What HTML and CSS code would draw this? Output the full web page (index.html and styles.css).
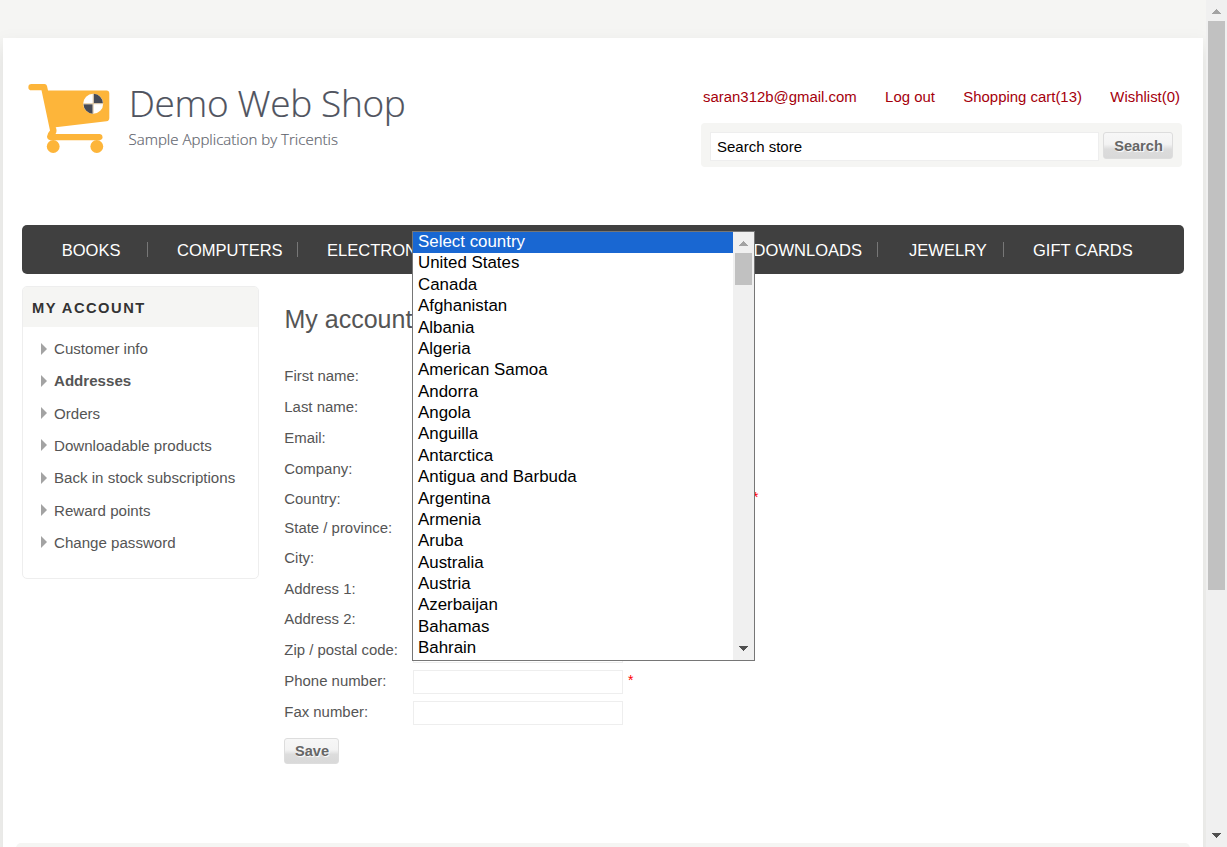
FILE: index.html
```html
<!DOCTYPE html>
<html lang="en">
<head>
<meta charset="utf-8">
<title>Demo Web Shop. Account</title>
<link rel="stylesheet" href="styles.css">
</head>
<body>
<div class="window">
  <div class="viewport">
    <div class="page">
      <header class="header">
        <svg class="logo" width="390" height="80" viewBox="25 78 390 80">
          <g fill="#fdb53a">
            <path d="M31.500 84H44.500Q46.500 84 47 86L48 90.500H106.500Q109.300 90.500 109.300 93.500V118Q109.300 121 106.500 121.300L55.700 127.300Q57.500 131 55.500 134H100A3.200 3.200 0 0 1 100 140.300H50.500Q47 139.500 47 136.500Q47.500 133 50 130.500L41.500 90.300H31.500A3.100 3.100 0 0 1 31.500 84Z"/>
            <circle cx="53.200" cy="146.500" r="6.400"/>
            <circle cx="96.800" cy="146.500" r="6.400"/>
          </g>
          <circle cx="93.200" cy="103.700" r="10" fill="#fff"/>
          <path fill="#474b57" d="M93.700 103.200V93.700A9.700 9.700 0 0 1 102.900 103.200ZM92.700 104.200V113.700A9.700 9.700 0 0 1 83.500 104.200Z"/>
          <path d="M83.200 103.700H103.200M93.200 93.700V113.700" stroke="#d8bd90" stroke-width=".8"/>
          <text class="logo-title" x="128.800" y="117" textLength="277">Demo Web Shop</text>
          <text class="logo-sub" x="128.500" y="144.500" textLength="209.500">Sample Application by Tricentis</text>
        </svg>
        <div class="tools">
          <nav class="links"><a>saran312b@gmail.com</a><a>Log out</a><a>Shopping cart(13)</a><a>Wishlist(0)</a></nav>
          <form class="search"><span class="search-input">Search store</span><span class="button search-button">Search</span></form>
        </div>
      </header>
      <ul class="menu">
        <li class="m-books">BOOKS</li>
        <li class="m-computers">COMPUTERS</li>
        <li class="m-electronics">ELECTRON</li>
        <li class="m-digital">DOWNLOADS</li>
        <li class="m-jewelry">JEWELRY</li>
        <li class="m-gift">GIFT CARDS</li>
      </ul>
      <div class="columns">
        <aside class="account">
          <h2>MY ACCOUNT</h2>
          <ul>
            <li>Customer info</li>
            <li class="active">Addresses</li>
            <li>Orders</li>
            <li>Downloadable products</li>
            <li>Back in stock subscriptions</li>
            <li>Reward points</li>
            <li>Change password</li>
          </ul>
        </aside>
        <main class="content">
          <h1>My account</h1>
          <div class="row"><label>First name:</label><span class="field"></span></div>
          <div class="row"><label>Last name:</label><span class="field"></span></div>
          <div class="row"><label>Email:</label><span class="field"></span></div>
          <div class="row r30"><label>Company:</label><span class="field"></span></div>
          <div class="row r29"><label>Country:</label><span class="field country"></span><b class="star">*</b></div>
          <div class="row r30"><label>State / province:</label><span class="field"></span></div>
          <div class="row"><label>City:</label><span class="field"></span></div>
          <div class="row r30"><label>Address 1:</label><span class="field"></span></div>
          <div class="row"><label>Address 2:</label><span class="field"></span></div>
          <div class="row"><label>Zip / postal code:</label><span class="field"></span></div>
          <div class="row"><label>Phone number:</label><span class="field"></span><b class="star">*</b></div>
          <div class="row"><label>Fax number:</label><span class="field"></span></div>
          <span class="button save">Save</span>
        </main>
      </div>
      <footer class="footer"></footer>
    </div>
  </div>
  <div class="scrollbar">
    <svg class="arrow" width="9" height="5"><path d="M4 0h1v1h1v1h1v1h1v1h1v1H0V4h1V3h1V2h1V1h1z" fill="#a3a3a3"/></svg>
    <div class="thumb"></div>
    <svg class="arrow arrow-down" width="9" height="5"><path d="M0 0h9v1H8v1H7v1H6v1H5v1H4V4H3V3H2V2H1V1H0z" fill="#505050"/></svg>
  </div>
</div>
<div class="dropdown">
  <ul class="options">
    <li class="selected">Select country</li>
    <li>United States</li><li>Canada</li><li>Afghanistan</li><li>Albania</li><li>Algeria</li><li>American Samoa</li><li>Andorra</li><li>Angola</li><li>Anguilla</li><li>Antarctica</li><li>Antigua and Barbuda</li><li>Argentina</li><li>Armenia</li><li>Aruba</li><li>Australia</li><li>Austria</li><li>Azerbaijan</li><li>Bahamas</li><li>Bahrain</li>
  </ul>
  <div class="list-scroll">
    <svg class="arrow" width="9" height="5"><path d="M4 0h1v1h1v1h1v1h1v1h1v1H0V4h1V3h1V2h1V1h1z" fill="#a3a3a3"/></svg>
    <div class="list-thumb"></div>
    <svg class="arrow arrow-down" width="9" height="5"><path d="M0 0h9v1H8v1H7v1H6v1H5v1H4V4H3V3H2V2H1V1H0z" fill="#505050"/></svg>
  </div>
</div>
</body>
</html>
```
FILE: styles.css
```css
* { box-sizing: border-box; }
body { margin: 0; font-family: "Liberation Sans", Arial, sans-serif; font-size: 14.93px; color: #555; overflow: hidden; }
ul, h1, h2 { margin: 0; padding: 0; list-style: none; font-weight: normal; }
.window { display: flex; width: 1227px; height: 847px; overflow: hidden; }
.viewport { width: 1206px; height: 847px; padding: 38px 3px 0; background: #f5f5f3; overflow: hidden; }
.page { display: flex; flex-direction: column; width: 1200px; height: 809px; padding: 0 19px; background: #fff; box-shadow: 0 12px 20px 4px rgba(0,0,0,.08); overflow: hidden; }
.header { display: flex; justify-content: space-between; height: 187px; padding: 40px 2px 0 3px; flex: none; }
.logo { display: block; }
.logo text { font-family: "Open Sans", sans-serif; font-weight: 300; }
.logo-title { font-size: 37px; fill: #4f535e; stroke: #4f535e; stroke-width: .2px; }
.logo-sub { font-size: 15px; fill: #62656e; stroke: #62656e; stroke-width: .2px; }
.tools { width: 481px; padding-top: 7px; }
.links { display: flex; justify-content: space-between; height: 38px; padding: 3px 2px 0 2px; line-height: 18px; color: #a5000c; white-space: nowrap; }
.search { display: flex; gap: 4px; width: 481px; height: 44px; padding: 9px; background: #f5f5f3; border-radius: 4px; }
.search-input { width: 389px; height: 29px; padding-left: 6px; border: 1px solid #eee; background: #fff; color: #000; font-size: 15px; line-height: 28px; }
.button { display: flex; align-items: center; justify-content: center; border: 1px solid #ddd; border-radius: 3px; background: linear-gradient(#f7f7f7 0, #f3f3f3 45%, #dcdcdc 65%, #d9d9d9); color: #666; font-size: 14.6px; font-weight: bold; text-shadow: 1px 1px 1px #fff; }
.search-button { width: 70px; height: 27px; padding-left: 1px; }
.menu { display: flex; align-items: center; flex: none; width: 1162px; height: 49px; background: #404040; border-radius: 5px; color: #fff; font-size: 16.55px; white-space: nowrap; }
.menu li { height: 15px; line-height: 17px; border-right: 1px solid #777; padding-left: 29px; }
.menu .m-books { width: 126px; padding-left: 39.7px; }
.menu .m-computers { width: 150px; }
.menu .m-electronics { width: 160px; }
.menu .m-digital { width: 420px; padding: 0 15px 0 0; text-align: right; }
.menu .m-jewelry { width: 126px; padding-left: 31px; }
.menu .m-gift { border: 0; }
.columns { display: flex; flex: none; gap: 25px; height: 569px; padding-top: 12px; }
.account { width: 237px; height: 293px; border: 1px solid #eee; border-radius: 5px; overflow: hidden; }
.account h2 { height: 40px; padding-left: 9px; background: #f5f5f3; color: #333; font-size: 14.7px; font-weight: bold; letter-spacing: 1.5px; line-height: 42px; }
.account ul { padding: 5.4px 0 0 18px; }
.account li { display: flex; align-items: center; gap: 7px; height: 32.3px; font-size: 15.1px; }
.account li::before { content: ""; border-left: 6px solid #a3a3a3; border-top: 6px solid transparent; border-bottom: 6px solid transparent; }
.account .active { font-weight: bold; }
.content { width: 900px; }
.content h1 { height: 78px; padding: 18px 0 0 .5px; font-size: 25px; line-height: 30px; }
.row { display: flex; height: 31px; }
.r30 { height: 30px; }
.r29 { height: 29px; }
.row label { width: 129px; padding-left: .3px; line-height: 24px; }
.field { width: 210px; height: 24px; margin-top: 1px; border: 1px solid #eee; }
.country { width: 336px; }
.star { margin-left: 5px; color: #f00; font-size: 14px; font-weight: normal; line-height: 22px; }
.country + .star { margin-left: 4px; line-height: 20px; }
.save { width: 55px; height: 26px; margin-top: 7px; padding-left: 1px; }
.footer { flex: none; width: 1174px; height: 30px; margin-left: -6px; background: #f5f5f3; border-radius: 5px; }
.scrollbar { display: flex; flex-direction: column; align-items: center; width: 21px; padding: 9px 2px; background: #f0f0f0; }
.thumb { width: 17px; height: 569px; margin-top: 7px; background: #c1c1c1; }
.arrow { display: block; flex: none; shape-rendering: crispEdges; }
.arrow-down { margin-top: auto; }
.dropdown { position: absolute; left: 412px; top: 231px; display: flex; width: 343px; height: 430px; border: 1px solid #767676; background: #fff; color: #000; font-size: 16.9px; }
.options { width: 320px; }
.options li { height: 21.38px; padding-left: 5px; line-height: 20.8px; white-space: nowrap; }
.options .selected { background: #1967d2; color: #fff; }
.list-scroll { display: flex; flex-direction: column; align-items: center; width: 21px; padding: 9px 0; background: #f0f0f0; }
.list-thumb { width: 17px; height: 32px; margin-top: 7px; background: #c1c1c1; }
```
